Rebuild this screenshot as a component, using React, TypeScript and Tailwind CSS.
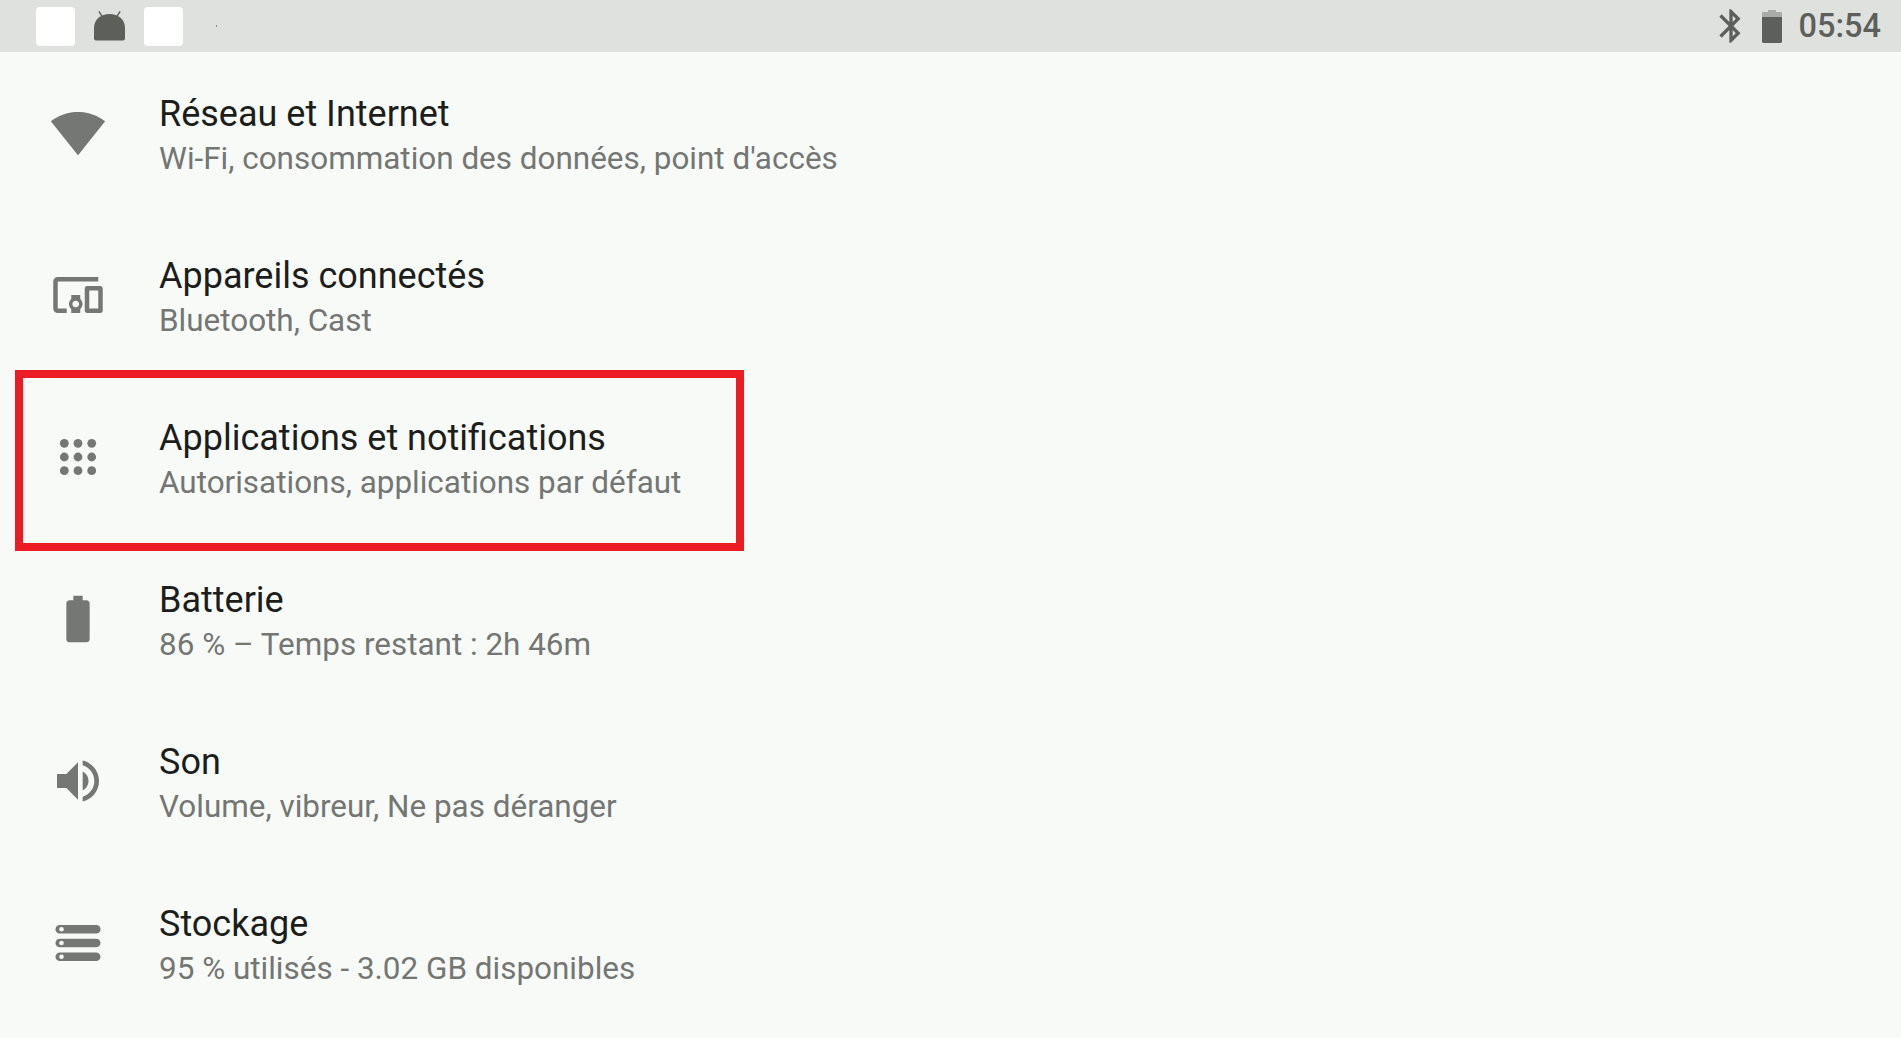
import React from 'react';

const WifiIcon = () => (
  <svg viewBox="0 0 24 24" className="w-14 h-14 fill-[#757775]">
    <path d="M12.01 21.49L23.64 7c-.45-.34-4.93-4-11.64-4C5.28 3 .81 6.66.36 7l11.63 14.49.01.01.01-.01z" />
  </svg>
);

const DevicesIcon = () => (
  <svg viewBox="0 0 24 24" className="w-[54px] h-[54px] fill-[#757775]">
    <path d="M3 6h18V4H3c-1.1 0-2 .9-2 2v12c0 1.1.9 2 2 2h4v-2H3V6zm10 6H9v1.78c-.61.55-1 1.33-1 2.22s.39 1.67 1 2.22V20h4v-1.78c.61-.55 1-1.34 1-2.22s-.39-1.67-1-2.22V12zm-2 5.5c-.83 0-1.5-.67-1.5-1.5s.67-1.5 1.5-1.5 1.5.67 1.5 1.5-.67 1.5-1.5 1.5zM22 8h-6c-.5 0-1 .5-1 1v10c0 .5.5 1 1 1h6c.5 0 1-.5 1-1V9c0-.5-.5-1-1-1zm-1 10h-4v-8h4v8z" />
  </svg>
);

const AppsIcon = () => (
  <svg viewBox="0 0 56 56" className="w-14 h-14 fill-[#757775]">
    {[14.3, 28, 41.7].map(y =>
      [14.3, 28, 41.7].map(x => <circle key={`${x}-${y}`} cx={x} cy={y} r="4.4" />)
    )}
  </svg>
);

const BatteryIcon = () => (
  <svg viewBox="0 0 24 24" className="w-14 h-14 fill-[#757775]">
    <path d="M15.67 4H14V2h-4v2H8.33C7.6 4 7 4.6 7 5.33v15.33C7 21.4 7.6 22 8.33 22h7.33c.74 0 1.34-.6 1.34-1.33V5.33C17 4.6 16.4 4 15.67 4z" />
  </svg>
);

const VolumeIcon = () => (
  <svg viewBox="0 0 24 24" className="w-14 h-14 fill-[#757775]">
    <path d="M3 9v6h4l5 5V4L7 9H3zm13.5 3c0-1.77-1.02-3.29-2.5-4.03v8.05c1.48-.73 2.5-2.25 2.5-4.02zM14 3.23v2.06c2.89.86 5 3.54 5 6.71s-2.11 5.85-5 6.71v2.06c4.01-.91 7-4.49 7-8.77s-2.99-7.86-7-8.77z" />
  </svg>
);

const StorageIcon = () => (
  <svg viewBox="0 0 56 56" className="w-14 h-14">
    {[14.3, 28, 41.7].map(y => (
      <g key={y}>
        <rect x="5.5" y={y - 4.3} width="45" height="8.6" rx="4.3" fill="#757775" />
        <circle cx="11.5" cy={y} r="2.3" fill="#f8faf8" />
      </g>
    ))}
  </svg>
);

const rows = [
  { title: 'Réseau et Internet', sub: "Wi-Fi, consommation des données, point d'accès", icon: <WifiIcon /> },
  { title: 'Appareils connectés', sub: 'Bluetooth, Cast', icon: <DevicesIcon /> },
  { title: 'Applications et notifications', sub: 'Autorisations, applications par défaut', icon: <AppsIcon /> },
  { title: 'Batterie', sub: '86 % – Temps restant : 2h 46m', icon: <BatteryIcon /> },
  { title: 'Son', sub: 'Volume, vibreur, Ne pas déranger', icon: <VolumeIcon /> },
  { title: 'Stockage', sub: '95 % utilisés - 3.02 GB disponibles', icon: <StorageIcon /> },
];

export default function App() {
  return (
    <div className="relative h-[1038px] overflow-hidden bg-[#f8faf8] font-['Roboto',sans-serif]">
      <div className="flex h-[52px] items-center justify-between bg-[#dfe1df] pl-9 pr-[20px]">
        <div className="flex items-center">
          <div className="h-[39px] w-[39px] rounded-[4px] bg-white" />
          <svg viewBox="0 0 32 30" className="ml-[19px] h-[30px] w-[31px] fill-[#5c5f5a]">
            <path d="M0 28V17C0 8 7 2.5 16 2.5S32 8 32 17v11c0 1-.8 2-2 2H2c-1.2 0-2-1-2-2z" />
            <path d="M5 0l4 6M27 0l-4 6" stroke="#5c5f5a" strokeWidth="1.5" />
          </svg>
          <div className="ml-[19px] h-[39px] w-[39px] rounded-[4px] bg-white" />
          <div className="ml-[33px] h-[2px] w-[1px] bg-[#8a8c8a]" />
        </div>
        <div className="flex items-center">
          <svg viewBox="0 0 24 24" className="h-10 w-10 fill-[#5c5f5c]">
            <path d="M17.71 7.71L12 2h-1v7.59L6.41 5 5 6.41 10.59 12 5 17.59 6.41 19 11 14.41V22h1l5.71-5.71-4.3-4.29 4.3-4.29zM13 5.83l1.88 1.88L13 9.59V5.83zm1.88 10.46L13 18.17v-3.76l1.88 1.88z" />
          </svg>
          <svg viewBox="0 0 20 33" className="ml-[11px] h-[33px] w-5">
            <path d="M6 0h8v2h4.500c.8 0 1.500.7 1.500 1.500V7H0V3.500C0 2.700.7 2 1.500 2H6z" fill="#a9aba8" />
            <path d="M0 7h20v24.500c0 .8-.7 1.500-1.500 1.500h-17C.7 33 0 32.300 0 31.500z" fill="#5c5f5c" />
          </svg>
          <span className="ml-[17px] text-[32.5px] font-medium leading-none text-[#5c5f5c]">05:54</span>
        </div>
      </div>

      <div className="flex flex-col">
        {rows.map(row => (
          <div key={row.title} className="flex h-[162px] items-center pl-[50px]">
            <div className="flex h-14 w-14 items-center justify-center">{row.icon}</div>
            <div className="ml-[53px] flex flex-col pt-[6px]">
              <div className="text-[36px] leading-[46px] text-[#1c1e1c]">{row.title}</div>
              <div className="text-[31.45px] leading-[44px] text-[#747674]">{row.sub}</div>
            </div>
          </div>
        ))}
      </div>

      <div className="absolute left-[15px] top-[370px] h-[181px] w-[729px] border-8 border-[#ed1c24]" />
    </div>
  );
}
